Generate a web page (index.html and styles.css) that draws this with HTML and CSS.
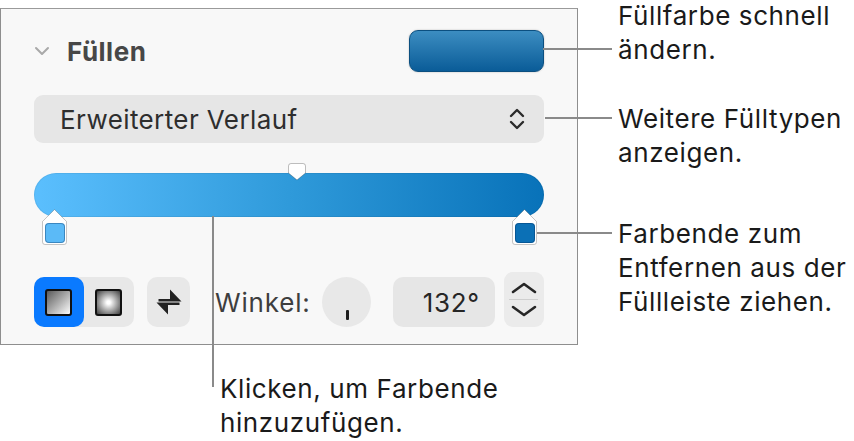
FILE: index.html
```html
<!DOCTYPE html>
<html lang="de">
<head>
    <meta charset="UTF-8">
    <meta name="viewport" content="width=device-width, initial-scale=1.0">
    <title>Füllen</title>
    <link rel="stylesheet" href="styles.css">
</head>
<body>
    <div class="figure">
        <div class="panel">
            <div class="panel-header">
                <div class="title">
                    <svg class="disclosure" width="16" height="10" viewBox="0 0 16 10">
                        <polyline points="2,2 8,8 14,2" fill="none" stroke="#a9a9a9" stroke-width="2" stroke-linecap="round" stroke-linejoin="round"/>
                    </svg>
                    <span>Füllen</span>
                </div>
                <div class="color-well"></div>
            </div>

            <div class="popup">
                <span>Erweiterter Verlauf</span>
                <svg width="16" height="22" viewBox="0 0 16 22">
                    <polyline points="2,8 8,2 14,8" fill="none" stroke="#2b2b2b" stroke-width="2.4" stroke-linecap="round" stroke-linejoin="round"/>
                    <polyline points="2,14 8,20 14,14" fill="none" stroke="#2b2b2b" stroke-width="2.4" stroke-linecap="round" stroke-linejoin="round"/>
                </svg>
            </div>

            <div class="ramp">
                <div class="ramp-bar"></div>
                <svg class="midpoint" style="left: 254px" width="18" height="18" viewBox="0 0 18 18">
                    <path d="M3 0.5 H15 Q17.5 0.5 17.5 3 V10 L9 17 L0.5 10 V3 Q0.5 0.5 3 0.5 Z" fill="#fff" stroke="rgba(0,0,0,0.25)"/>
                </svg>
                <div class="stop" style="left: 8px">
                    <svg width="25" height="36" viewBox="0 0 25 36">
                        <path d="M12.5 0.5 L24.5 12.5 V33 Q24.5 35.5 22 35.5 H3 Q0.5 35.5 0.5 33 V12.5 Z" fill="#fff" stroke="rgba(0,0,0,0.22)"/>
                    </svg>
                    <i style="background: #5bbaf7"></i>
                </div>
                <div class="stop" style="left: 478px">
                    <svg width="25" height="36" viewBox="0 0 25 36">
                        <path d="M12.5 0.5 L24.5 12.5 V33 Q24.5 35.5 22 35.5 H3 Q0.5 35.5 0.5 33 V12.5 Z" fill="#fff" stroke="rgba(0,0,0,0.22)"/>
                    </svg>
                    <i style="background: #0b70b6"></i>
                </div>
            </div>

            <div class="controls">
                <div class="segmented">
                    <div class="segment selected"><span class="swatch linear"></span></div>
                    <div class="segment"><span class="swatch radial"></span></div>
                </div>
                <div class="swap">
                    <svg width="26" height="26" viewBox="0 0 26 26">
                        <path d="M14 0.5 L25.5 12.4 H2.5 V10 H14 Z" fill="#222"/>
                        <path d="M12 25.5 L0.5 13.6 H23.5 V16 H12 Z" fill="#222"/>
                    </svg>
                </div>
                <span class="angle-label">Winkel:</span>
                <div class="dial"><i></i></div>
                <div class="angle-field">132°</div>
                <div class="stepper">
                    <svg width="26" height="12" viewBox="0 0 26 12">
                        <polyline points="2,10 13,2 24,10" fill="none" stroke="#262626" stroke-width="2.6" stroke-linecap="round" stroke-linejoin="round"/>
                    </svg>
                    <hr>
                    <svg width="26" height="12" viewBox="0 0 26 12">
                        <polyline points="2,2 13,10 24,2" fill="none" stroke="#262626" stroke-width="2.6" stroke-linecap="round" stroke-linejoin="round"/>
                    </svg>
                </div>
            </div>
        </div>

        <div class="notes">
            <p class="note note-well">Füllfarbe schnell<br>ändern.</p>
            <p class="note note-type">Weitere Fülltypen<br>anzeigen.</p>
            <p class="note note-stop">Farbende zum<br>Entfernen aus der<br>Füllleiste ziehen.</p>
        </div>

        <p class="note note-add">Klicken, um Farbende<br>hinzuzufügen.</p>

        <!-- Leader lines from the notes to the controls -->
        <span class="leader" style="left: 543px; top: 48px; width: 69px"></span>
        <span class="leader" style="left: 545px; top: 117px; width: 67px"></span>
        <span class="leader" style="left: 537px; top: 232px; width: 75px"></span>
        <span class="leader vertical" style="left: 212px; top: 216px; height: 171px"></span>
    </div>
</body>
</html>
```

FILE: styles.css
```css
body {
    margin: 0;
    background: #fff;
    font-family: Inter, "Noto Sans", sans-serif;
    color: #1c1c1c;
}

.figure {
    position: relative;
    width: 854px;
    height: 441px;
    display: grid;
    grid-template-columns: 578px 1fr;
    grid-template-rows: 337px 1fr;
    padding-top: 8px;
    box-sizing: border-box;
}

.panel {
    background: #f8f8f8;
    border: 1px solid #8e8e8e;
    border-top-color: #9a9a9a;
    padding: 21px 33px 0 33px;
}

/* header row */
.panel-header {
    display: flex;
    justify-content: space-between;
    align-items: center;
    height: 42px;
}

.title {
    display: flex;
    align-items: center;
    gap: 17px;
    font-weight: 700;
    font-size: 26px;
    letter-spacing: 0.5px;
    color: #474747;
}

.color-well {
    width: 135px;
    height: 42px;
    box-sizing: border-box;
    border-radius: 9px;
    border: 1px solid #0b4f80;
    background: linear-gradient(#3c8dc1, #0a5c98);
    box-shadow: 0 0 2px rgba(0, 0, 0, 0.25);
}

/* fill type popup */
.popup {
    margin-top: 23px;
    height: 48px;
    border-radius: 9px;
    background: #e6e6e6;
    display: flex;
    align-items: center;
    justify-content: space-between;
    padding: 0 19px 0 26px;
    font-size: 26px;
    letter-spacing: 0.4px;
    color: #2e2e2e;
}

/* gradient bar with stops */
.ramp {
    position: relative;
    height: 82px;
    margin-top: 20px;
    padding-top: 10px;
    box-sizing: border-box;
}

.ramp-bar {
    height: 44px;
    border-radius: 22px;
    background: linear-gradient(90deg, #5bbffe, #2f9ada 50%, #0872b9);
    box-shadow: inset 0 0 0 1px rgba(0, 0, 0, 0.06);
}

.midpoint {
    position: absolute;
    top: 0;
}

.stop {
    position: absolute;
    top: 46px;
    width: 25px;
    height: 36px;
    display: grid;
}

.stop svg,
.stop i {
    grid-area: 1 / 1;
}

.stop i {
    align-self: end;
    justify-self: center;
    margin-bottom: 2px;
    width: 20px;
    height: 20px;
    border-radius: 4px;
    box-shadow: inset 0 0 0 1px rgba(0, 40, 90, 0.35);
}

/* bottom controls */
.controls {
    margin-top: 32px;
    display: flex;
    align-items: center;
    height: 50px;
}

.segmented {
    display: flex;
    width: 102px;
    height: 50px;
    border-radius: 10px;
    background: #e8e8e8;
}

.segment {
    flex: 1;
    display: flex;
    align-items: center;
    justify-content: center;
    border-radius: 10px;
}

.segment.selected {
    background: #0a7aff;
}

.swatch {
    width: 27px;
    height: 27px;
    box-sizing: border-box;
    border: 2.5px solid #111;
    border-radius: 3px;
}

.swatch.linear {
    background: linear-gradient(135deg, #5a5a5a, #fdfdfd);
}

.swatch.radial {
    background: radial-gradient(circle, #fff 10%, #4a4a4a 95%);
}

.swap {
    margin-left: 13px;
    width: 44px;
    height: 50px;
    border-radius: 10px;
    background: #e8e8e8;
    display: flex;
    align-items: center;
    justify-content: center;
}

.angle-label {
    margin-left: 25px;
    font-size: 26px;
    letter-spacing: 0.8px;
    color: #3e3e3e;
}

.dial {
    margin-left: 11px;
    width: 50px;
    height: 50px;
    border-radius: 50%;
    background: #e8e8e8;
    position: relative;
}

.dial i {
    position: absolute;
    left: 24px;
    top: 33px;
    width: 3px;
    height: 10px;
    border-radius: 1px;
    background: #1e1e1e;
}

.angle-field {
    margin-left: 22px;
    width: 104px;
    height: 50px;
    border-radius: 10px;
    background: #e6e6e6;
    box-sizing: border-box;
    padding-right: 15px;
    display: flex;
    align-items: center;
    justify-content: flex-end;
    font-size: 26px;
    letter-spacing: 0.7px;
    color: #262626;
}

.stepper {
    margin-left: 9px;
    width: 41px;
    height: 55px;
    margin-top: -5px;
    border-radius: 9px;
    background: #ebebeb;
    display: flex;
    flex-direction: column;
    align-items: center;
    justify-content: center;
}

.stepper hr {
    width: 29px;
    margin: 5px 0;
    border: 0;
    border-top: 1px solid #cfcfcf;
}

/* callout texts */
.notes {
    padding-left: 40px;
}

.note {
    margin: 0;
    font-size: 26px;
    letter-spacing: 0.6px;
    line-height: 34px;
    color: #1a1a1a;
}

.note-well {
    margin-top: -9px;
}

.note-type {
    margin-top: 35px;
}

.note-stop {
    margin-top: 47px;
}

.note-add {
    grid-column: 1;
    margin-left: 220px;
    margin-top: 27px;
}

.leader {
    position: absolute;
    height: 2px;
    background: #8a8a8a;
}

.leader.vertical {
    width: 2px;
}
```
